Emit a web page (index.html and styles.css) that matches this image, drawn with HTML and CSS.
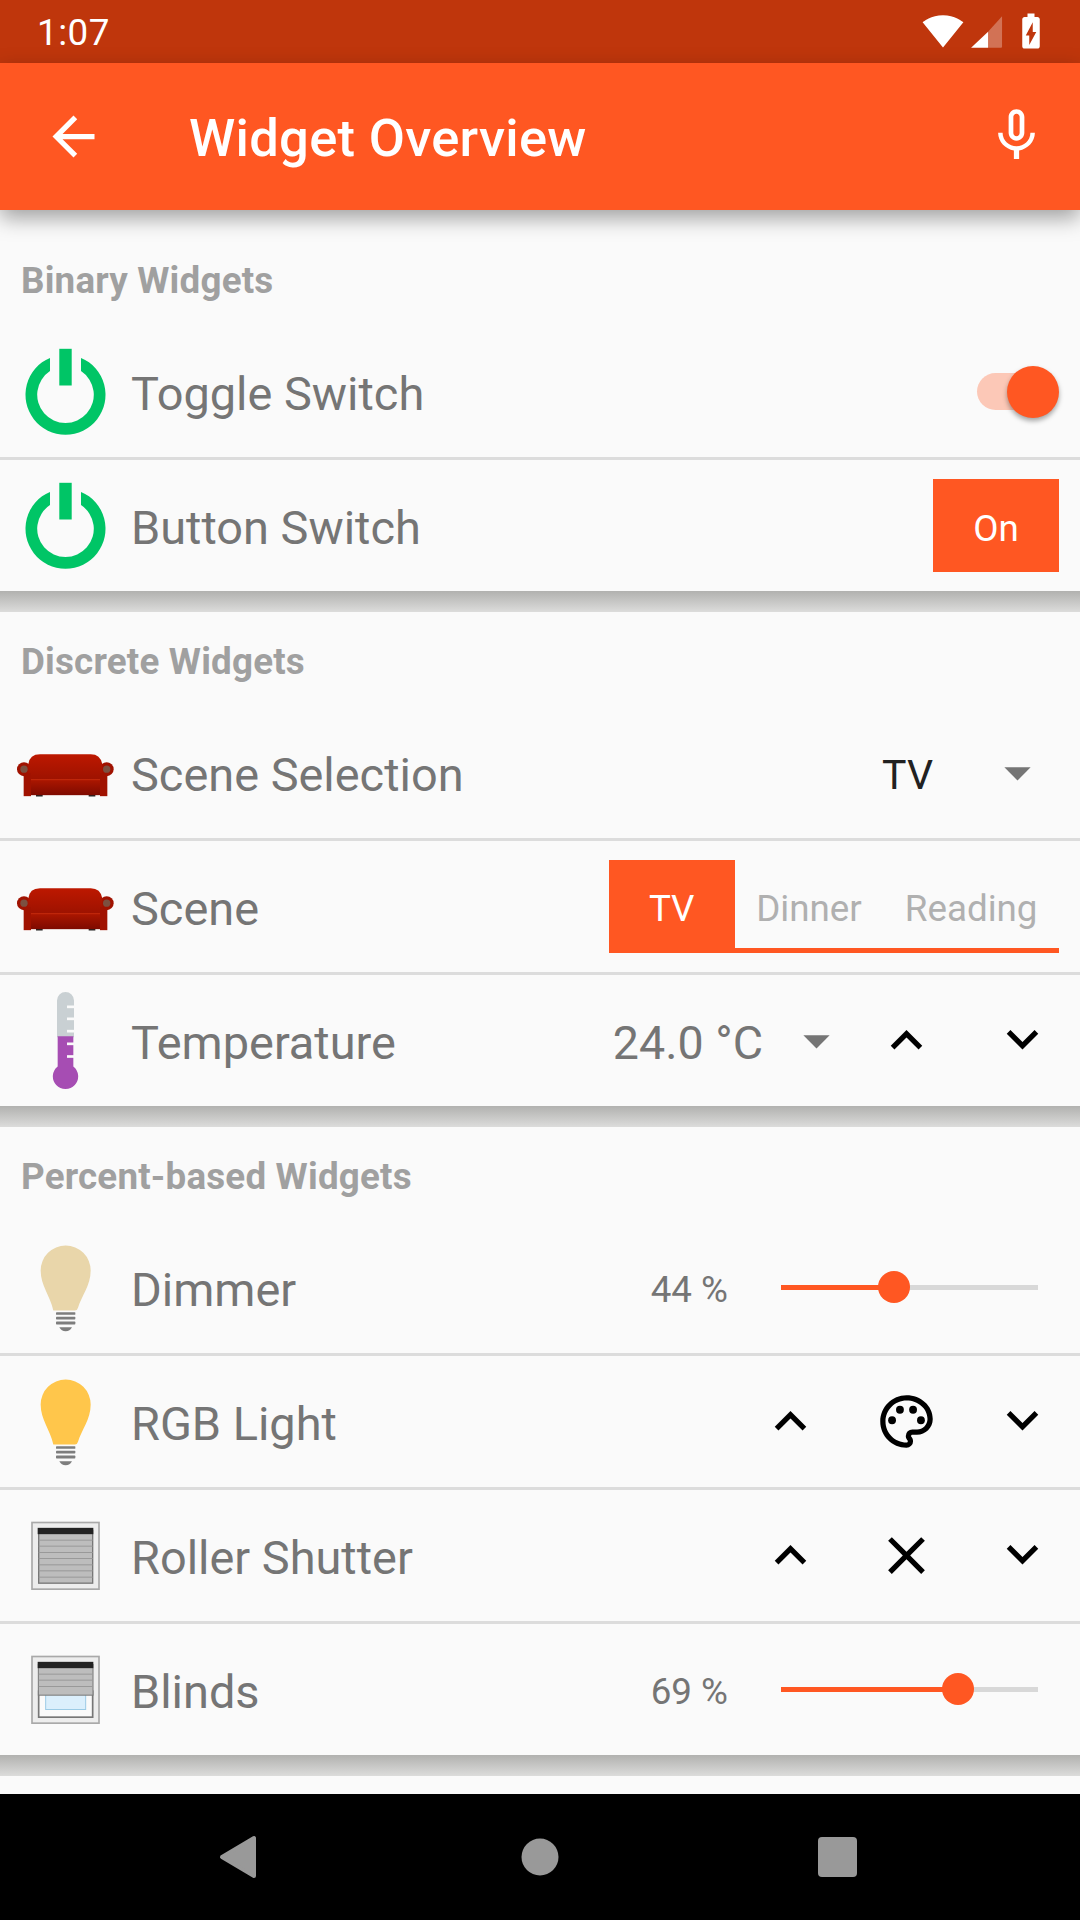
FILE: index.html
```html
<!DOCTYPE html>
<html lang="en">
<head>
    <meta charset="UTF-8">
    <meta name="viewport" content="width=device-width, initial-scale=1.0">
    <title>Widget Overview</title>
    <link rel="stylesheet" href="styles.css">
</head>

<body>
    <!-- shared drawings, coordinates are 3x the on-screen pixels -->
    <svg class="defs" aria-hidden="true">
        <defs>
            <linearGradient id="sofaBack" x1="0" y1="0" x2="0" y2="1">
                <stop offset="0" stop-color="#bd1800"/>
                <stop offset="1" stop-color="#9c1200"/>
            </linearGradient>
            <linearGradient id="sofaSeat" x1="0" y1="0" x2="0" y2="1">
                <stop offset="0" stop-color="#ad1700"/>
                <stop offset="1" stop-color="#7e0a00"/>
            </linearGradient>
            <g id="power">
                <path fill="#00c566" d="M34 15.9A40 40 0 1 0 65 15.9L65 29.1A28.3 28.3 0 1 1 34 29.1Z"/>
                <rect fill="#00c566" x="43.3" y="6.8" width="12.4" height="36.7"/>
            </g>
            <g id="sofa">
                <rect fill="#222" x="108" y="220" width="20" height="8"/>
                <rect fill="#222" x="266" y="220" width="20" height="8"/>
                <circle fill="#a01200" cx="72" cy="146" r="21"/>
                <circle fill="#a01200" cx="320" cy="146" r="21"/>
                <circle fill="#7c5040" cx="72" cy="146" r="11"/>
                <circle fill="#7c5040" cx="320" cy="146" r="11"/>
                <path fill="url(#sofaBack)" d="M85 180V132Q88 101 120 101H272Q302 101 307 132V180Z"/>
                <rect fill="#a01200" x="71" y="158" width="22" height="69"/>
                <rect fill="#a01200" x="300" y="158" width="22" height="69"/>
                <rect fill="url(#sofaSeat)" x="93" y="176" width="207" height="48"/>
                <rect fill="#c42a0c" x="93" y="176" width="207" height="3"/>
            </g>
            <g id="bulb">
                <path d="M160 270C150 225 122 195 122 150A75 75 0 0 1 272 150C272 195 245 225 234 262Q232 270 225 270Z"/>
                <g fill="#7d7d7d">
                    <rect x="168" y="275" width="58" height="8" rx="2"/>
                    <rect x="168" y="289" width="58" height="8" rx="2"/>
                    <rect x="168" y="303" width="58" height="9" rx="2"/>
                    <path d="M178 320H216Q210 332 197 332Q184 332 178 320Z"/>
                </g>
            </g>
            <g id="casing">
                <rect fill="#ededed" stroke="#a9a9a9" stroke-width="5" x="96" y="126" width="201" height="200"/>
            </g>
        </defs>
    </svg>

    <div class="status-bar">
        <span class="clock">1:07</span>
        <div class="status-icons">
            <svg class="status-icon" viewBox="0 0 24 24"><path fill="#fff" d="M12.01 21.49L23.64 7c-.45-.34-4.93-4-11.64-4C5.28 3 .81 6.66.36 7l11.63 14.49.01.01.01-.01z"/></svg>
            <svg class="status-icon" viewBox="0 0 24 24"><path fill="#fff" fill-opacity=".3" d="M12.6 12.4L20.6 3.6V21a.6.6 0 0 1-.6.6H12.6Z"/><path fill="#fff" d="M2.9 21.6L12.6 12.4V21.6Z"/></svg>
            <svg class="status-icon" viewBox="0 0 24 24"><path fill="#fff" d="M15.67 4H14V2h-4v2H8.33C7.6 4 7 4.6 7 5.33v15.33C7 21.4 7.6 22 8.33 22h7.33c.74 0 1.34-.6 1.34-1.33V5.33C17 4.6 16.4 4 15.67 4zM11 20v-5.5H9L13 7v5.5h2L11 20z"/></svg>
        </div>
    </div>

    <header class="toolbar">
        <svg class="tool-icon back" viewBox="0 0 24 24"><path d="M20 11H7.83l5.59-5.59L12 4l-8 8 8 8 1.41-1.41L7.83 13H20v-2z"/></svg>
        <h1 class="title">Widget Overview</h1>
        <svg class="tool-icon mic" viewBox="0 .4 24 24"><path d="M12 14c1.66 0 2.99-1.34 2.99-3L15 5c0-1.66-1.34-3-3-3S9 3.34 9 5v6c0 1.66 1.34 3 3 3zm-1.2-9.1c0-.66.54-1.2 1.2-1.2.66 0 1.2.54 1.2 1.2l-.01 6.2c0 .66-.53 1.2-1.19 1.2-.66 0-1.2-.54-1.2-1.2V4.9zm6.5 6.1c0 3-2.54 5.1-5.3 5.1S6.7 14 6.7 11H5c0 3.41 2.72 6.23 6 6.72V21h2v-3.28c3.28-.48 6-3.3 6-6.72h-1.7z"/></svg>
    </header>

    <main class="content">
        <section>
            <h2 class="section-title">Binary Widgets</h2>
            <div class="row">
                <svg class="item-icon" viewBox="0 0 100 100"><use href="#power"/></svg>
                <span class="label">Toggle Switch</span>
                <div class="toggle"><span class="toggle-track"></span><span class="toggle-thumb"></span></div>
            </div>
            <div class="row">
                <svg class="item-icon" viewBox="0 0 100 100"><use href="#power"/></svg>
                <span class="label">Button Switch</span>
                <button class="on-button">On</button>
            </div>
        </section>
        <div class="section-gap"></div>

        <section>
            <h2 class="section-title">Discrete Widgets</h2>
            <div class="row">
                <svg class="item-icon" viewBox="48 7.5 300 300"><use href="#sofa"/></svg>
                <span class="label">Scene Selection</span>
                <div class="dropdown">
                    <span class="dropdown-value">TV</span>
                    <svg class="btn-icon caret" viewBox="0 0 24 24"><path d="M7 10l5 5 5-5z"/></svg>
                </div>
            </div>
            <div class="row">
                <svg class="item-icon" viewBox="48 7.5 300 300"><use href="#sofa"/></svg>
                <span class="label">Scene</span>
                <div class="segments">
                    <span class="segment active">TV</span>
                    <span class="segment">Dinner</span>
                    <span class="segment">Reading</span>
                </div>
            </div>
            <div class="row flush">
                <svg class="item-icon" viewBox="48 811.5 300 300">
                    <path fill="#c9d0d3" d="M171 950V840A25.500 25.500 0 0 1 222 840V950Z"/>
                    <path fill="#a64db3" d="M173 947H220V1038A38 38 0 1 1 173 1038Z"/>
                    <g fill="#fafafa">
                        <rect x="201" y="855" width="22" height="8"/>
                        <rect x="201" y="891" width="22" height="8"/>
                        <rect x="201" y="928" width="22" height="8"/>
                        <rect x="201" y="966" width="22" height="8"/>
                        <rect x="201" y="1004" width="22" height="8"/>
                    </g>
                </svg>
                <span class="label">Temperature</span>
                <span class="setpoint">24.0 °C</span>
                <svg class="btn-icon caret" viewBox="0 0 24 24"><path d="M7 10l5 5 5-5z"/></svg>
                <span class="icon-button"><svg class="btn-icon" viewBox="0 0 24 24"><path d="M12 8l-6 6 1.410 1.410L12 10.830l4.590 4.580L18 14z"/></svg></span>
                <span class="icon-button"><svg class="btn-icon" viewBox="0 .6 24 24"><path d="M16.590 8.590L12 13.170 7.410 8.590 6 10l6 6 6-6z"/></svg></span>
            </div>
        </section>
        <div class="section-gap"></div>

        <section>
            <h2 class="section-title">Percent-based Widgets</h2>
            <div class="row">
                <svg class="item-icon" viewBox="48 52.5 300 300"><use href="#bulb" fill="#e9d6aa"/></svg>
                <span class="label">Dimmer</span>
                <span class="percent">44 %</span>
                <div class="slider">
                    <span class="slider-fill" style="width: 44%"></span>
                    <span class="slider-thumb" style="left: 44%"></span>
                </div>
            </div>
            <div class="row flush">
                <svg class="item-icon" viewBox="48 52.5 300 300"><use href="#bulb" fill="#ffc64b"/></svg>
                <span class="label">RGB Light</span>
                <span class="icon-button"><svg class="btn-icon" viewBox="0 0 24 24"><path d="M12 8l-6 6 1.410 1.410L12 10.830l4.590 4.580L18 14z"/></svg></span>
                <span class="icon-button"><svg class="btn-icon" viewBox="0 0 24 24"><path d="M12 22C6.490 22 2 17.510 2 12S6.490 2 12 2s10 4.040 10 9c0 3.310-2.690 6-6 6h-1.770c-.28 0-.5.22-.5.5 0 .12.05.23.13.33.41.47.64 1.060.64 1.670A2.500 2.500 0 0 1 12 22zm0-18c-4.410 0-8 3.590-8 8s3.590 8 8 8c.28 0 .5-.22.5-.5a.54.54 0 0 0-.14-.35c-.41-.46-.63-1.050-.63-1.650a2.500 2.500 0 0 1 2.500-2.500H16c2.210 0 4-1.790 4-4 0-3.860-3.590-7-8-7z"/><circle cx="6.500" cy="11.500" r="1.500"/><circle cx="9.500" cy="7.500" r="1.500"/><circle cx="14.500" cy="7.500" r="1.500"/><circle cx="17.500" cy="11.500" r="1.500"/></svg></span>
                <span class="icon-button"><svg class="btn-icon" viewBox="0 .6 24 24"><path d="M16.590 8.590L12 13.170 7.410 8.590 6 10l6 6 6-6z"/></svg></span>
            </div>
            <div class="row flush">
                <svg class="item-icon" viewBox="48 76.5 300 300">
                    <use href="#casing"/>
                    <rect fill="#bdbdbd" stroke="#777" stroke-width="4" x="116" y="150" width="162" height="158"/>
                    <rect fill="#222" x="113" y="142" width="167" height="19"/>
                    <path stroke="#999" stroke-width="3" d="M116 179H278M116 197H278M116 216H278M116 234H278M116 253H278M116 271H278M116 290H278"/>
                </svg>
                <span class="label">Roller Shutter</span>
                <span class="icon-button"><svg class="btn-icon" viewBox="0 0 24 24"><path d="M12 8l-6 6 1.410 1.410L12 10.830l4.590 4.580L18 14z"/></svg></span>
                <span class="icon-button"><svg class="btn-icon" viewBox="0 0 24 24"><path d="M19 6.410L17.590 5 12 10.590 6.410 5 5 6.410 10.590 12 5 17.590 6.410 19 12 13.410 17.590 19 19 17.590 13.410 12z"/></svg></span>
                <span class="icon-button"><svg class="btn-icon" viewBox="0 .6 24 24"><path d="M16.590 8.590L12 13.170 7.410 8.590 6 10l6 6 6-6z"/></svg></span>
            </div>
            <div class="row">
                <svg class="item-icon" viewBox="48 76.5 300 300">
                    <use href="#casing"/>
                    <rect fill="#fafafa" stroke="#777" stroke-width="5" x="116" y="230" width="162" height="78"/>
                    <rect fill="#dbeffc" stroke="#9ccbe5" stroke-width="3" x="137" y="230" width="120" height="55"/>
                    <rect fill="#bdbdbd" stroke="#777" stroke-width="3" x="115" y="150" width="164" height="92"/>
                    <rect fill="#222" x="113" y="142" width="167" height="19"/>
                    <path stroke="#999" stroke-width="3" d="M116 179H278M116 197H278M116 216H278"/>
                </svg>
                <span class="label">Blinds</span>
                <span class="percent">69 %</span>
                <div class="slider">
                    <span class="slider-fill" style="width: 69%"></span>
                    <span class="slider-thumb" style="left: 69%"></span>
                </div>
            </div>
        </section>
        <div class="section-gap"></div>
    </main>

    <nav class="nav-bar">
        <svg class="nav-icon" viewBox="0 0 60 60"><path fill="#999" stroke="#999" stroke-width="4" stroke-linejoin="round" d="M44 11V49L12 30Z"/></svg>
        <svg class="nav-icon" viewBox="0 0 60 60"><circle fill="#999" cx="30" cy="30" r="18.500"/></svg>
        <svg class="nav-icon" viewBox="0 0 60 60"><rect fill="#999" x="8" y="10" width="39" height="40" rx="4"/></svg>
    </nav>
</body>

</html>
```

FILE: styles.css
```css
html,
body {
    margin: 0;
    height: 1920px;
}

body {
    width: 1080px;
    display: flex;
    flex-direction: column;
    overflow: hidden;
    background: #fafafa;
    font-family: 'Roboto', 'Noto Sans', sans-serif;
    color: #757575;
}

.defs {
    width: 0;
    height: 0;
    flex: none;
}

/* status bar */
.status-bar {
    height: 63px;
    flex: none;
    display: flex;
    align-items: center;
    justify-content: space-between;
    padding: 0 28px 0 37px;
    background: #bf360c;
    color: #fff;
}

.clock {
    padding-top: 2px;
    font-size: 36.75px;
    letter-spacing: 0.5px;
}

.status-icons {
    display: flex;
    gap: 2px;
    margin-top: -1px;
}

.status-icon {
    width: 42px;
    height: 42px;
}

/* toolbar */
.toolbar {
    height: 147px;
    flex: none;
    display: flex;
    align-items: center;
    position: relative;
    z-index: 1;
    background: #ff5722;
    box-shadow: 0 8px 20px rgba(0, 0, 0, 0.36);
}

.tool-icon {
    width: 63px;
    height: 63px;
    fill: #fff;
}

.back {
    margin-left: 42px;
}

.title {
    flex: 1;
    margin: 0 0 0 84px;
    padding-top: 2px;
    font-size: 52.5px;
    font-weight: 500;
    letter-spacing: 0.3px;
    color: #fff;
}

.mic {
    margin-right: 32px;
}

/* list */
.content {
    flex: 1;
    padding-top: 21px;
}

.section-title {
    height: 95px;
    margin: 0;
    padding: 3px 0 0 21px;
    box-sizing: border-box;
    display: flex;
    align-items: center;
    font-size: 36.75px;
    font-weight: 700;
    letter-spacing: 0.2px;
    color: #a0a0a0;
}

.section-gap {
    height: 21px;
    background: linear-gradient(#b1b1af, #dcdcdb);
}

.row {
    height: 131px;
    display: flex;
    align-items: center;
    padding: 0 21px 0 16px;
}

.row + .row {
    border-top: 3px solid #dcdcdc;
}

.flush {
    padding-right: 0;
}

.item-icon {
    width: 100px;
    height: 100px;
    flex: none;
    margin-right: 15px;
}

.label {
    flex: 1;
    padding-top: 4px;
    font-size: 46.9px;
}

/* toggle */
.toggle {
    width: 82px;
    height: 52px;
    position: relative;
    display: flex;
    align-items: center;
}

.toggle-track {
    width: 76px;
    height: 37px;
    border-radius: 19px;
    background: #fcc8b7;
}

.toggle-thumb {
    position: absolute;
    top: 0;
    right: 0;
    width: 52px;
    height: 52px;
    border-radius: 50%;
    background: #ff5722;
    box-shadow: 0 3px 5px rgba(0, 0, 0, 0.35);
}

.on-button {
    width: 126px;
    height: 93px;
    padding: 5px 0 0;
    border: 0;
    background: #ff5722;
    font: inherit;
    font-size: 36.75px;
    color: #fff;
}

/* dropdowns */
.dropdown {
    display: flex;
    align-items: center;
    gap: 53px;
    margin-right: 10px;
}

.dropdown-value {
    padding-top: 4px;
    font-size: 41px;
    color: #212121;
}

.btn-icon {
    width: 63px;
    height: 63px;
    flex: none;
}

.caret {
    fill: #757575;
}

.setpoint {
    margin-right: 22px;
    padding-top: 4px;
    font-size: 46.6px;
}

.icon-button {
    width: 116px;
    flex: none;
    display: flex;
    justify-content: center;
}

/* scene buttons */
.segments {
    height: 93px;
    box-sizing: border-box;
    display: flex;
    border-bottom: 5px solid #ff5722;
}

.segment {
    display: flex;
    align-items: center;
    padding: 8px 21.5px 0;
    font-size: 36.75px;
    color: #b0b0b0;
}

.segment.active {
    width: 126px;
    height: 93px;
    box-sizing: border-box;
    padding: 3px 0 0;
    justify-content: center;
    background: #ff5722;
    color: #fff;
}

/* sliders */
.percent {
    padding-top: 4px;
    font-size: 36.75px;
}

.slider {
    width: 257px;
    height: 5px;
    margin: -1px 21px 0 53px;
    position: relative;
    display: flex;
    background: #d8d8d8;
}

.slider-fill {
    background: #ff5722;
}

.slider-thumb {
    position: absolute;
    top: -14px;
    width: 32px;
    height: 32px;
    margin-left: -16px;
    border-radius: 50%;
    background: #ff5722;
}

/* navigation */
.nav-bar {
    height: 126px;
    flex: none;
    display: flex;
    align-items: center;
    justify-content: center;
    gap: 240px;
    background: #000;
}

.nav-icon {
    width: 60px;
    height: 60px;
}
```
